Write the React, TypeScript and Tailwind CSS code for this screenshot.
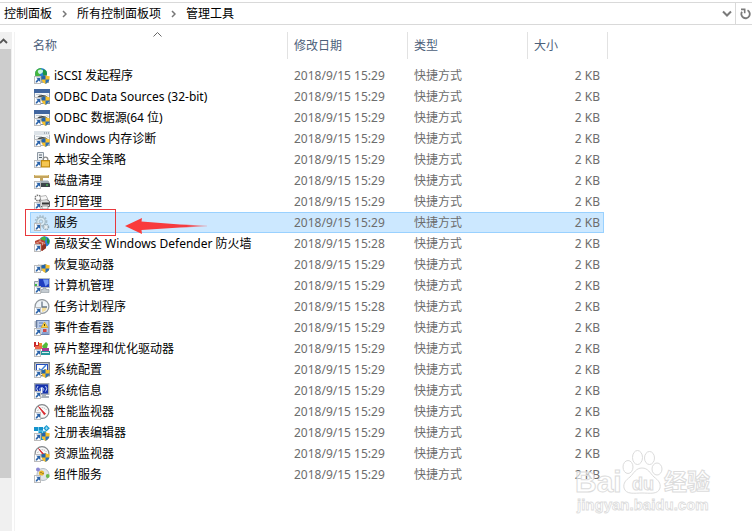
import React, { type ReactNode } from "react";

function Shortcut() {
  return (
    <g>
      <rect x="0.5" y="8.5" width="6" height="7" fill="#fff" stroke="#bcbcbc" />
      <path d="M2 9.700h4v4l-1.300-1.200-1.700 2H1.700v-1l2-2.500z" fill="#2a62a8" />
    </g>
  );
}

function Shield() {
  return (
    <g>
      <path d="M11.500 7c1.300.8 2.700 1.200 4.200 1.200 0 3.600-.9 6.300-4.200 7.700-3.300-1.400-4.200-4.100-4.200-7.700 1.500 0 2.900-.4 4.200-1.200z" fill="#f6c02c" />
      <path d="M11.500 7v4.500H7.600c-.2-1-.3-2.100-.3-3.300 1.500 0 2.900-.4 4.200-1.200z" fill="#2364ad" />
      <path d="M11.500 11.500h3.900c-.5 2-1.700 3.500-3.900 4.400z" fill="#2a70bb" />
    </g>
  );
}

function Globe() {
  return (
    <g>
      <circle cx="7" cy="6" r="6" fill="#2a80d8" />
      <path d="M1.500 3.500C2.500 1.500 5 0 7 0l1 3-2 4-2 3-2-1C.8 7 1 5 1.500 3.500z" fill="#46b63c" />
      <path d="M9.500 1l3 2 .5 3-1.500 3-2-1.500-1-3z" fill="#1d9440" />
      <path d="M4 2.500c2-1.600 4-1.300 5 0 .3 2-1.500 3.500-3.500 3.500C4 5 3.500 3.500 4 2.500z" fill="#c9f4ea" />
    </g>
  );
}

function OdbcWindow({ bar, frame }: { bar: string; frame: string }) {
  return (
    <g>
      <rect x="0.500" y="0.500" width="15" height="14" fill="#f4f6f7" stroke={frame} />
      <rect x="0" y="0" width="16" height="4" fill={bar} />
      <path d="M2 5.500h6" stroke="#c5ccd2" />
      <path d="M4 8.500c1.500-2 7-2.300 9 0" fill="none" stroke="#3f4648" strokeWidth="1.700" />
      <path d="M13 5.500l1 1" stroke="#8593a6" />
      <Shield />
    </g>
  );
}

function Gauge() {
  return (
    <g>
      <circle cx="8" cy="7.500" r="6.900" fill="#f9f9f9" stroke="#83888c" strokeWidth="1.200" />
      <path d="M3.600 7a5 5 0 0 1 9.200-.5" fill="none" stroke="#a5a5a5" strokeDasharray="1 1" />
      <path d="M4.500 2.500l5.800 8.300 1.200-1z" fill="#d9262c" stroke="#d9262c" strokeWidth=".8" />
    </g>
  );
}

const drawings: Record<string, ReactNode> = {
  iscsi: (
    <>
      <path d="M8 9h7v6H6z" fill="#9ba8b1" />
      <Globe />
      <Shield />
    </>
  ),
  odbc: <OdbcWindow bar="#41669f" frame="#8593a6" />,
  memory: (
    <>
      <OdbcWindow bar="#dde3e8" frame="#aab2ba" />
      <path d="M10 2h1M12 2h1M14 2h1" stroke="#707d88" />
    </>
  ),
  policy: (
    <>
      <path d="M3.500.5h6v12h-6z" fill="#e9edf0" stroke="#8d98a3" />
      <path d="M5 3h3M5 5.500h3" stroke="#56616b" />
      <path d="M9.200 9V7.500a2.300 2.300 0 0 1 4.600 0V9" fill="none" stroke="#8a8a8a" strokeWidth="1.300" />
      <rect x="7.500" y="8.500" width="8" height="6.500" fill="#edb52d" stroke="#b98717" />
      <path d="M8 11h7M8 13h7" stroke="#ffe08a" strokeWidth=".8" />
    </>
  ),
  cleanup: (
    <>
      <path d="M0 2h15v3H9v3H6V5H0z" fill="#c4a45d" />
      <path d="M1 2.500h13" stroke="#e7d39b" />
      <path d="M5 8h9l2 3v3H5z" fill="#3c4549" />
      <path d="M6 7.500h8l1.500 2.500H6z" fill="#a3adb3" />
      <rect x="12" y="11.500" width="2" height="1" fill="#55e35b" />
    </>
  ),
  print: (
    <>
      <circle cx="4" cy="4" r="2.800" fill="#fff" stroke="#777" strokeWidth="1.500" strokeDasharray="1.500 .8" />
      <path d="M6 5.500h7l2.500 2v5H6z" fill="#dedede" stroke="#5b5b5b" />
      <path d="M6 2.500l6-1 2 4-7 1z" fill="#f7f7f7" stroke="#999" strokeWidth=".7" />
      <path d="M8 8.500h7v2H8z" fill="#373737" />
      <path d="M8 12h6v3H8z" fill="#fafafa" stroke="#777" strokeWidth=".7" />
    </>
  ),
  services: (
    <>
      <circle cx="7" cy="6.500" r="4.300" fill="#dcecf5" stroke="#a4bac7" strokeWidth="1.200" />
      <circle cx="7" cy="6.500" r="5.600" fill="none" stroke="#a4bac7" strokeWidth="1.600" strokeDasharray="1.500 1.500" />
      <circle cx="7" cy="6.500" r="1.700" fill="#cce8ff" stroke="#a4bac7" />
      <circle cx="12" cy="12" r="2.500" fill="#e8eff3" stroke="#8ea4b1" strokeWidth="1.600" strokeDasharray="1.200 .8" />
    </>
  ),
  firewall: (
    <>
      <g transform="translate(4 0)">
        <circle cx="6.500" cy="5.500" r="5.300" fill="#2a80d8" />
        <path d="M2 3.500C3 1.500 5 .4 7 .4l1 2.600-2 4-3 1z" fill="#46b63c" />
        <path d="M9 1.500l2.500 2.500-.5 4-2-1z" fill="#1d9440" />
      </g>
      <path d="M1 5l5-2 5 2 1 7-4 3-7-3z" fill="#b64735" />
      <path d="M1 7.500l5-2 5 2M6 3v3M4 7v3M8.500 6.500v3M8 10l4-1" fill="none" stroke="#edb9aa" strokeWidth=".7" />
      <path d="M8 9.500l4-1.500v4l-4 3z" fill="#8b3427" />
    </>
  ),
  recovery: (
    <>
      <path d="M4 7.500h7l4 1.500v5H4z" fill="#a3acb2" />
      <path d="M5 7h7l2.500 2H4z" fill="#e3e7e9" />
      <Shield />
    </>
  ),
  computer: (
    <>
      <path d="M0.500 3.500h4v7h-4z" fill="#dce2e7" stroke="#8e9aa5" />
      <path d="M1 7h2" stroke="#40bd43" strokeWidth="2" />
      <rect x="4.500" y="0.500" width="11" height="9" fill="#1f3fc0" stroke="#b3bac2" />
      <path d="M9 1.500h5.500v4l-3 3z" fill="#779df4" />
      <path d="M9 10h3v1.500h3v3H7v-3h2z" fill="#c4cbd1" stroke="#7e8891" strokeWidth=".5" />
    </>
  ),
  clock: (
    <>
      <circle cx="8" cy="7.500" r="6.900" fill="#eff4f8" stroke="#92989d" strokeWidth="1.300" />
      <path d="M8 8h4.800a4.800 4.800 0 0 1-4.800 5z" fill="#f2dc9a" />
      <path d="M8 2.500v5.500h5" fill="none" stroke="#687887" strokeWidth="1.300" />
    </>
  ),
  events: (
    <>
      <rect x="2.500" y="0.500" width="12.500" height="14" fill="#b9cbe9" stroke="#6c83ae" />
      <path d="M0.500 2h3M0.500 4h3M0.500 6h3" stroke="#66758c" />
      <path d="M5 3h4M5 6h3M8 13h6" stroke="#5878b7" />
      <path d="M10.500 2l3.500 5.500H7z" fill="#ffd43a" stroke="#c69620" strokeWidth=".6" />
      <path d="M10.500 4v2" stroke="#4d3b00" />
      <rect x="9" y="9" width="3.500" height="3" fill="#d14848" />
    </>
  ),
  defrag: (
    <>
      <path d="M0 1h2v3h2V1h1v5H0z" fill="#c9282b" />
      <path d="M5 2h3v3H5z" fill="#e8922b" />
      <path d="M1 5h7v3H1z" fill="#ed6a50" />
      <path d="M8 5l4-4 2 2-1 4-4 1z" fill="#51bd3a" />
      <path d="M8 7h7v3H8z" fill="#a93b92" />
      <path d="M7 10h9v4H7z" fill="#26969b" />
      <path d="M8 11.500h7" stroke="#d9eeee" />
    </>
  ),
  config: (
    <>
      <rect x="0.700" y="0.700" width="14.500" height="13" fill="#f8fafc" stroke="#747b83" strokeWidth="1.400" />
      <rect x="2.500" y="2.500" width="11" height="9" fill="#fff" stroke="#244dbb" />
      <path d="M5 6.500l2 2 5-5.500" fill="none" stroke="#4181d6" strokeWidth="1.500" />
      <Shield />
    </>
  ),
  info: (
    <>
      <rect x="0.700" y="0.700" width="14" height="10.500" fill="#1632ad" stroke="#a4abb3" strokeWidth="1.400" />
      <path d="M4 8.500a4 4 0 0 1 0-5.500M11.500 8.500a4 4 0 0 0 0-5.500M6 7.500a2 2 0 1 1 3.500 0" fill="none" stroke="#c3d6fb" />
      <path d="M7.700 5v5" stroke="#fff" strokeWidth="1.600" />
      <path d="M8 12h4v1h3v2H7z" fill="#a9b1ba" />
    </>
  ),
  gauge: <Gauge />,
  registry: (
    <>
      <path d="M0 2h9v4h3v9H4V6H0z" fill="#1592cb" />
      <path d="M4.500 2v13M8.500 6v8M4 6h8M4 10h8" stroke="#8adbf4" strokeWidth=".8" />
      <path d="M12.500 0l3.300 3.200-3.300 3.200-3.300-3.200z" fill="#1b9bd0" />
      <path d="M12.500 1.700v3M11 3.200h3" stroke="#b7ecff" strokeWidth=".7" />
      <Shield />
    </>
  ),
  resource: (
    <>
      <Gauge />
      <Shield />
    </>
  ),
  component: (
    <>
      <circle cx="9" cy="7.500" r="6" fill="#e0e5e9" stroke="#b3bcc4" />
      <circle cx="4" cy="2.500" r="2" fill="#8986d2" />
      <circle cx="7.500" cy="6" r="2.600" fill="#e9b72c" />
      <circle cx="13.700" cy="9" r="1.900" fill="#6bb94a" />
      <path d="M6.500 5.500h1M8.500 6.500h1" stroke="#65522b" />
    </>
  ),
};

function ToolIcon({ name }: { name: string }) {
  return (
    <svg width="16" height="16" viewBox="0 0 16 16" className="shrink-0" aria-hidden="true">
      {drawings[name]}
      <Shortcut />
    </svg>
  );
}

const tools = [
  { name: "iSCSI 发起程序", icon: "iscsi", date: "2018/9/15 15:29" },
  { name: "ODBC Data Sources (32-bit)", icon: "odbc", date: "2018/9/15 15:29" },
  { name: "ODBC 数据源(64 位)", icon: "odbc", date: "2018/9/15 15:29" },
  { name: "Windows 内存诊断", icon: "memory", date: "2018/9/15 15:29" },
  { name: "本地安全策略", icon: "policy", date: "2018/9/15 15:29" },
  { name: "磁盘清理", icon: "cleanup", date: "2018/9/15 15:29" },
  { name: "打印管理", icon: "print", date: "2018/9/15 15:29" },
  { name: "服务", icon: "services", date: "2018/9/15 15:29", selected: true },
  { name: "高级安全 Windows Defender 防火墙", icon: "firewall", date: "2018/9/15 15:28" },
  { name: "恢复驱动器", icon: "recovery", date: "2018/9/15 15:29" },
  { name: "计算机管理", icon: "computer", date: "2018/9/15 15:29" },
  { name: "任务计划程序", icon: "clock", date: "2018/9/15 15:28" },
  { name: "事件查看器", icon: "events", date: "2018/9/15 15:29" },
  { name: "碎片整理和优化驱动器", icon: "defrag", date: "2018/9/15 15:29" },
  { name: "系统配置", icon: "config", date: "2018/9/15 15:29" },
  { name: "系统信息", icon: "info", date: "2018/9/15 15:29" },
  { name: "性能监视器", icon: "gauge", date: "2018/9/15 15:29" },
  { name: "注册表编辑器", icon: "registry", date: "2018/9/15 15:29" },
  { name: "资源监视器", icon: "resource", date: "2018/9/15 15:29" },
  { name: "组件服务", icon: "component", date: "2018/9/15 15:29" },
];

function Crumb({ children }: { children: ReactNode }) {
  return (
    <li>
      <a href="#" className="text-black">{children}</a>
    </li>
  );
}

function CrumbArrow() {
  return (
    <li aria-hidden="true" className="flex w-[25px] justify-center">
      <svg width="5" height="8" viewBox="0 0 5 8">
        <path d="M1 1l3 3-3 3" fill="none" stroke="#777" strokeWidth="1.500" />
      </svg>
    </li>
  );
}

function AddressBar() {
  return (
    <nav aria-label="地址" className="mt-0.5 flex h-[23px] shrink-0 items-stretch border-y border-[#d9d9d9]">
      <ol className="flex flex-1 items-center pl-1">
        <Crumb>控制面板</Crumb>
        <CrumbArrow />
        <Crumb>所有控制面板项</Crumb>
        <CrumbArrow />
        <Crumb>管理工具</Crumb>
      </ol>
      <button type="button" aria-label="以前的位置" className="flex w-4 items-center justify-center">
        <svg width="10" height="7" viewBox="0 0 10 7">
          <path d="M1 1.500l4 4 4-4" fill="none" stroke="#7a7a7a" strokeWidth="2" />
        </svg>
      </button>
      <button type="button" aria-label="刷新" className="flex w-[17px] items-center border-l border-[#d9d9d9] pl-1">
        <svg width="11" height="12" viewBox="0 0 11 12">
          <path d="M7.500 2.300A4.200 4.200 0 1 1 2 3.800" fill="none" stroke="#7a7a7a" strokeWidth="1.800" />
          <path d="M1 1.400h4.400M4.700 .8v4.400" fill="none" stroke="#7a7a7a" strokeWidth="1.600" />
        </svg>
      </button>
    </nav>
  );
}

function TreeScrollbar() {
  return (
    <div className="flex w-3 shrink-0 flex-col bg-[#f0f0f0]">
      <button type="button" aria-label="向上滚动" className="flex h-[17px] items-center">
        <svg width="8" height="6" viewBox="0 0 8 6">
          <path d="M0 5l3.500-3.500L7 5" fill="none" stroke="#555" strokeWidth="1.800" />
        </svg>
      </button>
      <div className="mr-px h-[429px] bg-[#cdcdcd]" />
    </div>
  );
}

function Annotation() {
  return (
    <>
      <span className="pointer-events-none absolute -left-1.5 -top-1 h-[27px] w-[91px] border border-[#e8383d]" />
      <svg className="pointer-events-none absolute left-[94px] top-1" width="84" height="18" viewBox="0 0 84 18" aria-hidden="true">
        <defs>
          <linearGradient id="tail" x1="0" x2="1">
            <stop offset="0" stopColor="#fb3a3a" />
            <stop offset=".75" stopColor="#f53c40" />
            <stop offset="1" stopColor="#e88a93" stopOpacity=".4" />
          </linearGradient>
        </defs>
        <path d="M0 9L17 1l-.5 3.500L55 7.500l27 1v1l-27 1-38.500 2.500.5 4z" fill="url(#tail)" />
      </svg>
    </>
  );
}

function FileList() {
  const head = "h-[27px] border-r border-[#e2e2e2] p-0 pl-1.5 text-left font-normal text-[#4c607a]";
  return (
    <table className="w-[578px] table-fixed border-separate border-spacing-0 text-[#6d6d6d]">
      <colgroup>
        <col className="w-[258px]" />
        <col className="w-[120px]" />
        <col className="w-[120px]" />
        <col className="w-[76px]" />
        <col className="w-1" />
      </colgroup>
      <thead>
        <tr>
          <th aria-sort="ascending" className="relative h-[27px] border-r border-[#e2e2e2] p-0 pl-[3px] text-left font-normal text-[#4c607a]">
            名称
            <svg className="absolute left-[123px] top-0" width="9" height="5" viewBox="0 0 9 5" aria-hidden="true">
              <path d="M.5 4.500l4-4 4 4" fill="none" stroke="#666" />
            </svg>
          </th>
          <th className={head}>修改日期</th>
          <th className={head}>类型</th>
          <th colSpan={2} className={head}>大小</th>
        </tr>
        <tr aria-hidden="true">
          <td colSpan={5} className="h-1.5 p-0" />
        </tr>
      </thead>
      <tbody>
        {tools.map((tool) => {
          const cell = tool.selected ? "h-[21px] border-y border-[#99d1ff] bg-[#cce8ff] p-0" : "h-[21px] p-0";
          return (
            <tr key={tool.name} aria-selected={tool.selected ?? false}>
              <td className={tool.selected ? `${cell} relative border-l pl-[3px]` : `${cell} pl-1`}>
                <span className="flex h-[19px] items-center gap-1 whitespace-nowrap text-black">
                  <ToolIcon name={tool.icon} />
                  {tool.name}
                </span>
                {tool.selected && <Annotation />}
              </td>
              <td className={`${cell} pl-1.5`}>{tool.date}</td>
              <td className={`${cell} pl-1.5`}>快捷方式</td>
              <td className={tool.selected ? `${cell} border-r pr-[3px] text-right` : `${cell} pr-1 text-right`}>2 KB</td>
              <td className="p-0" />
            </tr>
          );
        })}
      </tbody>
    </table>
  );
}

function Watermark() {
  return (
    <svg
      className="pointer-events-none absolute bottom-3 right-9 font-['Liberation_Sans','Noto_Sans_CJK_SC',sans-serif] font-bold"
      width="144"
      height="70"
      viewBox="0 0 144 70"
      fill="#fff"
      fillOpacity=".6"
      stroke="#dcdcdc"
      strokeWidth="1"
      aria-label="Baidu 经验"
    >
      <text x="3" y="43" fontSize="30">Bai</text>
      <ellipse cx="56" cy="18" rx="5" ry="6.500" />
      <ellipse cx="65.500" cy="8.500" rx="5" ry="7" />
      <ellipse cx="77.500" cy="9" rx="5" ry="6.500" />
      <ellipse cx="85" cy="20" rx="5" ry="6" />
      <path d="M70 19c6 0 8 5 12 9 4 3 7 6 6 11-2 7-11 5-18 5s-16 2-18-5c-1-5 2-8 6-11 4-4 6-9 12-9z" />
      <text x="60" y="41" fontSize="18">du</text>
      <text x="92" y="41" fontSize="23">经验</text>
      <text x="5" y="61" fontSize="15" strokeWidth=".8">jingyan.baidu.com</text>
    </svg>
  );
}

export default function App() {
  return (
    <div className="relative flex min-h-screen flex-col overflow-hidden bg-white font-['Noto_Sans','Noto_Sans_CJK_SC',sans-serif] text-xs leading-4">
      <AddressBar />
      <main className="mt-[7px] flex flex-1">
        <TreeScrollbar />
        <div className="ml-0.5 flex-1 border-l border-[#f2f2f2] pl-[15px]">
          <FileList />
        </div>
      </main>
      <Watermark />
    </div>
  );
}
